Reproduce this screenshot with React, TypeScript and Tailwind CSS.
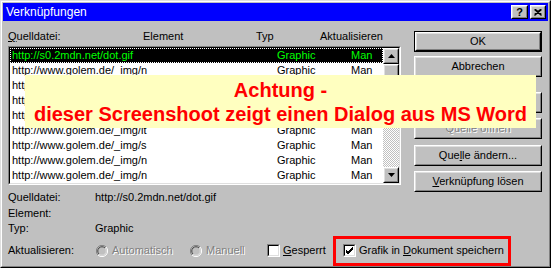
import React from 'react';

const font = "font-['Liberation_Sans',Arial,sans-serif]";

// classic raised 3d frame
function Raised({ children, className = '' }: { children?: React.ReactNode; className?: string }) {
  return (
    <div className={`border border-t-white border-l-white border-r-black border-b-black ${className}`}>
      <div className="w-full h-full border border-t-[#dfdfdf] border-l-[#dfdfdf] border-r-[#808080] border-b-[#808080] bg-[#c0c0c0] flex items-center justify-center">
        {children}
      </div>
    </div>
  );
}

function Btn({ children, isDefault, disabled, className = '' }: { children: React.ReactNode; isDefault?: boolean; disabled?: boolean; className?: string }) {
  const label = (
    <span className={disabled ? 'text-[#808080] [text-shadow:1px_1px_0_#fff]' : 'text-black'}>{children}</span>
  );
  if (isDefault) {
    return (
      <div className={`w-[128px] h-[21px] border border-black ${className}`}>
        <Raised className="w-full h-full">{label}</Raised>
      </div>
    );
  }
  return <Raised className={`w-[128px] h-[21px] ${className}`}>{label}</Raised>;
}

function CheckBox({ checked }: { checked?: boolean }) {
  return (
    <div className="w-[13px] h-[13px] border border-t-[#808080] border-l-[#808080] border-r-white border-b-white shrink-0">
      <div className="w-full h-full border border-t-black border-l-black border-r-[#dfdfdf] border-b-[#dfdfdf] bg-white flex items-center justify-center">
        {checked && (
          <svg width="9" height="9" viewBox="0 0 9 9">
            <path d="M1 4 L3 6 L8 1 M1 5 L3 7 L8 2 M1 6 L3 8 L8 3" stroke="black" strokeWidth="1" fill="none" />
          </svg>
        )}
      </div>
    </div>
  );
}

function Radio() {
  return (
    <svg width="12" height="12" viewBox="0 0 12 12" className="shrink-0">
      <circle cx="6" cy="6" r="5" fill="#c0c0c0" />
      <path d="M10 2 A5.5 5.5 0 0 0 2 10" stroke="#808080" strokeWidth="1" fill="none" />
      <path d="M9 3 A4.2 4.2 0 0 0 3 9" stroke="#404040" strokeWidth="1" fill="none" />
      <path d="M10 2 A5.5 5.5 0 0 1 2 10" stroke="#ffffff" strokeWidth="1" fill="none" />
      <path d="M9 3 A4.2 4.2 0 0 1 3 9" stroke="#dfdfdf" strokeWidth="1" fill="none" />
    </svg>
  );
}

const rows = [
  'http://s0.2mdn.net/dot.gif',
  'http://www.golem.de/_img/n',
  'http://www.golem.de/_img/s',
  'http://www.golem.de/_img/s',
  'http://www.golem.de/_img/n',
  'http://www.golem.de/_img/it',
  'http://www.golem.de/_img/s',
  'http://www.golem.de/_img/n',
  'http://www.golem.de/_img/n',
];

export default function App() {
  return (
    <div className={`relative w-[551px] h-[268px] ${font} text-[11px] text-black select-none`}>
      {/* window frame */}
      <div className="w-full h-full border border-t-[#dfdfdf] border-l-[#dfdfdf] border-r-black border-b-black">
        <div className="w-full h-full border border-t-white border-l-white border-r-[#808080] border-b-[#808080] bg-[#c0c0c0] p-px flex flex-col">
          {/* title bar */}
          <div className="h-[18px] bg-[#0000ff] flex items-center pl-[3px] pr-[2px] shrink-0">
            <span className="text-white text-[12px] leading-none">Verknüpfungen</span>
            <div className="ml-auto flex gap-[2px]">
              <Raised className="w-[17px] h-[14px]">
                <span className="text-[11px] font-bold leading-none">?</span>
              </Raised>
              <Raised className="w-[16px] h-[14px]">
                <svg width="8" height="7" viewBox="0 0 8 7">
                  <path d="M0.5 0.5 L7.5 6.5 M7.5 0.5 L0.5 6.5 M1.5 0.5 L7.5 5.5 M6.5 0.5 L0.5 5.5" stroke="black" strokeWidth="1.2" fill="none" />
                </svg>
              </Raised>
            </div>
          </div>

          {/* body */}
          <div className="flex pl-[5px] pt-[8px]">
            {/* left column */}
            <div className="w-[393px] flex flex-col">
              <div className="h-[14px] leading-[14px] flex whitespace-nowrap">
                <span className="w-[135px]"><span className="underline">Q</span>uelldatei:</span>
                <span className="w-[113px]">Element</span>
                <span className="w-[64px]">Typ</span>
                <span>Aktualisieren</span>
              </div>

              {/* list box */}
              <div className="mt-[3px] h-[139px] border border-t-[#808080] border-l-[#808080] border-r-white border-b-white">
                <div className="w-full h-full border border-t-black border-l-black border-r-[#dfdfdf] border-b-[#dfdfdf] bg-white flex">
                  <div className="flex-1 flex flex-col">
                    {rows.map((url, i) => (
                      <div
                        key={i}
                        className={`h-[15px] leading-[13px] flex whitespace-nowrap border ${
                          i === 0 ? 'bg-black text-[#00ff00] border-dotted border-white' : 'border-transparent'
                        }`}
                      >
                        <span className="w-[266px] pl-px overflow-hidden">{url}</span>
                        <span className="w-[74px]">Graphic</span>
                        <span>Man</span>
                      </div>
                    ))}
                  </div>
                  {/* scrollbar */}
                  <div className="w-[16px] flex flex-col">
                    <Raised className="w-[16px] h-[16px]">
                      <svg width="7" height="4" viewBox="0 0 7 4"><path d="M3.5 0 L7 4 L0 4 Z" fill="black" /></svg>
                    </Raised>
                    <div className="flex-1 flex flex-col bg-[repeating-conic-gradient(#c0c0c0_0%_25%,#ffffff_0%_50%)] bg-[length:2px_2px]">
                      <Raised className="w-[16px] h-[16px]" />
                    </div>
                    <Raised className="w-[16px] h-[16px]">
                      <svg width="7" height="4" viewBox="0 0 7 4"><path d="M0 0 L7 0 L3.5 4 Z" fill="black" /></svg>
                    </Raised>
                  </div>
                </div>
              </div>

              {/* details */}
              <div className="mt-[4px] h-[16px] flex items-center whitespace-nowrap">
                <span className="w-[87px]">Quelldatei:</span>
                <span>http://s0.2mdn.net/dot.gif</span>
              </div>
              <div className="h-[16px] flex items-center">
                <span className="w-[87px]">Element:</span>
              </div>
              <div className="h-[15px] flex items-center">
                <span className="w-[87px]">Typ:</span>
                <span>Graphic</span>
              </div>
            </div>

            {/* right column: buttons */}
            <div className="ml-[13px] mt-[2px] flex flex-col">
              <Btn isDefault>OK</Btn>
              <Btn className="mt-[4px]">Abbrechen</Btn>
              <Btn className="mt-[15px]" disabled>Jetzt aktualisieren</Btn>
              <Btn className="mt-[5px]" disabled>Quelle öffnen</Btn>
              <Btn className="mt-[6px]">
                Que<span className="underline">l</span>le ändern...
              </Btn>
              <Btn className="mt-[5px]">
                <span className="underline">V</span>erknüpfung lösen
              </Btn>
            </div>
          </div>

          {/* bottom row */}
          <div className="h-[29px] flex items-center pl-[5px] whitespace-nowrap">
            <span className="w-[88px]">Aktualisieren:</span>
            <div className="w-[94px] flex items-center">
              <Radio />
              <span className="ml-[4px] text-[#808080] [text-shadow:1px_1px_0_#fff]">Automatisch</span>
            </div>
            <div className="w-[77px] flex items-center">
              <Radio />
              <span className="ml-[4px] text-[#808080] [text-shadow:1px_1px_0_#fff]">Manuell</span>
            </div>
            <div className="w-[66px] flex items-center">
              <CheckBox />
              <span className="ml-[3px]"><span className="underline">G</span>esperrt</span>
            </div>
            <div className="w-[178px] h-[30px] border-[3px] border-[#ff0000] pl-[7px] flex items-center">
              <CheckBox checked />
              <span className="ml-[3px]">Grafik in <span className="underline">D</span>okument speichern</span>
            </div>
          </div>
        </div>
      </div>

      {/* note overlay */}
      <div className="absolute left-[25px] top-[75px] w-[511px] h-[53px] bg-[#ffffc0] flex flex-col items-center justify-center text-[#ff0000] font-bold text-[20px] leading-[24px] whitespace-nowrap">
        <span>Achtung -</span>
        <span>dieser Screenshoot zeigt einen Dialog aus MS Word</span>
      </div>
    </div>
  );
}
